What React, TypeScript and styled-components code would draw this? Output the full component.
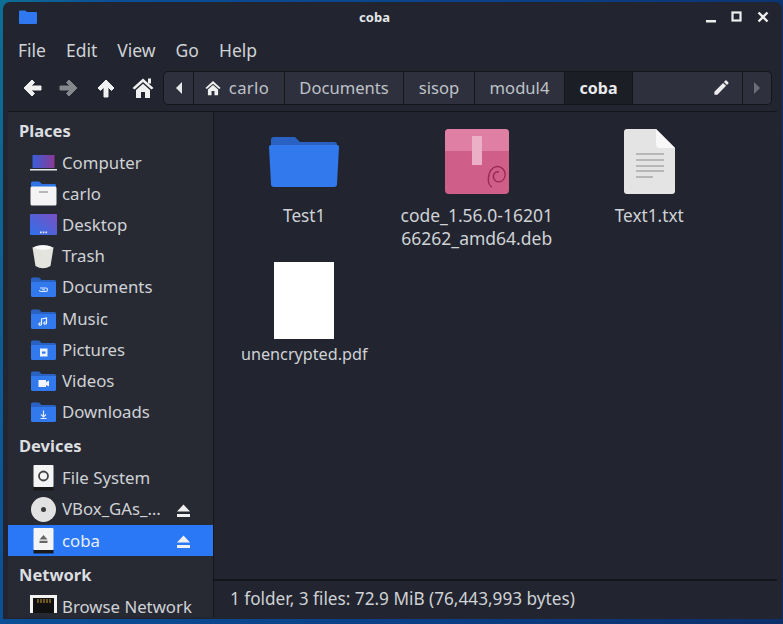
import React from "react";
import styled, { createGlobalStyle } from "styled-components";
import { MdEdit } from "react-icons/md";

const Global = createGlobalStyle`
  html, body { margin: 0; padding: 0; height: 100%; overflow: hidden; }
  body { background: #0a3f86; font-family: "Noto Sans", sans-serif; }
`;

const Desktop = styled.div`
  width: 783px;
  height: 624px;
  padding: 2px 1px 5px 3px;
  box-sizing: border-box;
  background: linear-gradient(100deg, #0d6f95 0%, #0b4f97 12%, #0a3f86 60%, #0c2f6a 100%);
`;

const Window = styled.div`
  height: 100%;
  display: flex;
  flex-direction: column;
  background: #22252f;
  border-radius: 7px 7px 0 0;
  color: #cfd2d6;
  overflow: hidden;
`;

const TitleBar = styled.div`
  height: 30px;
  display: flex;
  align-items: center;
  justify-content: space-between;
  padding: 0 13px 0 16px;
  flex: none;
`;

const TitleText = styled.div`
  font-size: 13px;
  font-weight: 700;
  color: #e4e6e8;
  margin-left: 7px;
`;

const WindowButtons = styled.div`
  display: flex;
  align-items: center;
  gap: 14px;
`;

const MenuBar = styled.div`
  height: 30px;
  display: flex;
  align-items: center;
  gap: 20px;
  padding: 5px 0 0 15px;
  box-sizing: border-box;
  font-size: 17.5px;
  flex: none;
`;

const Toolbar = styled.div`
  height: 49px;
  display: flex;
  align-items: center;
  padding: 2px 10px 0 18px;
  box-sizing: border-box;
  flex: none;
`;

const NavButtons = styled.div`
  display: flex;
  align-items: center;
  gap: 15px;
  margin-right: 9px;
`;

const PathBar = styled.div`
  flex: 1;
  height: 34px;
  display: flex;
  align-items: stretch;
  background: #14161c;
  border-radius: 5px;
  padding: 1px;
  gap: 1px;
  box-sizing: border-box;
  font-size: 16.6px;
`;

const Crumb = styled.div<{ $width: number; $active?: boolean }>`
  width: ${(p) => p.$width}px;
  flex: none;
  display: flex;
  align-items: center;
  justify-content: center;
  gap: 8px;
  box-sizing: border-box;
  background: ${(p) => (p.$active ? "#1c1e26" : "#2e313d")};
  color: ${(p) => (p.$active ? "#e8eaec" : "#bfc2c8")};
  font-size: ${(p) => (p.$active ? "16px" : "inherit")};
  font-weight: ${(p) => (p.$active ? 700 : 400)};
  &:first-child { border-radius: 4px 0 0 4px; }
  &:last-child { border-radius: 0 4px 4px 0; }
`;

const HomeCrumb = styled(Crumb)`
  letter-spacing: 0.4px;
  padding-right: 4px;
`;

const PathFill = styled.div`
  flex: 1;
  display: flex;
  align-items: center;
  justify-content: flex-end;
  padding-right: 11px;
  background: #2e313d;
  color: #ececec;
`;

const Body = styled.div`
  flex: 1;
  display: flex;
  min-height: 0;
  border-top: 1px solid #14161c;
  margin: 0 5px 2px 5px;
`;

const Sidebar = styled.div`
  width: 206px;
  flex: none;
  overflow: hidden;
  border-right: 1px solid #14161c;
  background: #282a33;
  padding-top: 3px;
  box-sizing: border-box;
`;

const SectionTitle = styled.div<{ $first?: boolean }>`
  height: 32px;
  margin-top: ${(p) => (p.$first ? 0 : 3)}px;
  display: flex;
  align-items: center;
  padding: 0 0 2px 11px;
  box-sizing: border-box;
  font-size: 16.5px;
  font-weight: 700;
  color: #dcdee0;
`;

const PlaceRow = styled.div<{ $selected?: boolean }>`
  height: 31.2px;
  display: flex;
  align-items: center;
  padding-left: 21px;
  font-size: 16.8px;
  line-height: 20px;
  position: relative;
  color: ${(p) => (p.$selected ? "#e6eefc" : "#cfd2d6")};
  background: ${(p) => (p.$selected ? "#2a78f5" : "transparent")};
`;

const PlaceIcon = styled.div`
  width: 28px;
  height: 28px;
  margin-right: 5px;
  display: flex;
  align-items: center;
  justify-content: center;
  flex: none;
`;

const CutOffIcon = styled(PlaceIcon)`
  align-items: flex-end;
  height: 18px;
  margin-bottom: 6px;
`;

const Eject = styled.div`
  position: absolute;
  left: 169px;
  top: 10px;
  display: flex;
`;

const Main = styled.div`
  flex: 1;
  display: flex;
  flex-direction: column;
  min-width: 0;
`;

const IconGrid = styled.div`
  flex: 1;
  display: grid;
  grid-template-columns: repeat(3, 172.5px);
  grid-auto-rows: 139px;
  padding: 11px 0 0 4px;
  align-content: start;
`;

const FileItem = styled.div`
  display: flex;
  flex-direction: column;
  align-items: center;
`;

const FileThumb = styled.div`
  height: 77px;
  display: flex;
  align-items: center;
  justify-content: center;
`;

const FileName = styled.div<{ $size: number }>`
  margin-top: 4px;
  width: 156px;
  font-size: ${(p) => p.$size}px;
  line-height: 23px;
  text-align: center;
  word-break: break-all;
`;

const BlankPage = styled.div`
  width: 60px;
  height: 77px;
  background: #fff;
`;

const StatusBar = styled.div`
  height: 38px;
  flex: none;
  display: flex;
  align-items: center;
  padding: 0 0 2px 16px;
  box-sizing: border-box;
  font-size: 17.2px;
  border-top: 2px solid #14161c;
  background: #22252f;
`;

const Arrow = ({ dir, color }: { dir: "left" | "right" | "up"; color: string }) => {
  const rotate = dir === "left" ? 0 : dir === "right" ? 180 : 90;
  return (
    <svg width="22" height="22" viewBox="0 0 22 22" style={{ transform: `rotate(${rotate}deg)` }}>
      <path d="M3 11 L11 3 L13.5 5.5 L10 9 H20 V13 H10 L13.5 16.5 L11 19 Z" fill={color} stroke={color} strokeLinejoin="round" />
    </svg>
  );
};

const HomeIcon = ({ size, chimney }: { size: number; chimney?: boolean }) => (
  <svg width={size} height={size} viewBox="0 0 22 22" fill="#f0f0f0">
    <path d="M11 1.5 L21.5 11 L19.5 12.5 L11 5 L2.5 12.5 L0.5 11 Z" />
    <path d="M4 13 L11 6.8 L18 13 V21 H13 V15 H9 V21 H4 Z" />
    {chimney && <rect x="16" y="1.5" width="3" height="5" />}
  </svg>
);

const FolderGlyph = ({ glyph }: { glyph?: React.ReactNode }) => (
  <svg width="25" height="20" viewBox="0 0 25 20">
    <path d="M0 2 Q0 0.5 1.5 0.5 H8 L10.5 3 H23.5 Q25 3 25 4.5 V8 H0 Z" fill="#2a62c4" />
    <path d="M0 5 H25 V18.5 Q25 20 23.5 20 H1.5 Q0 20 0 18.5 Z" fill="#3279ee" />
    {glyph}
  </svg>
);

const EjectIcon = () => (
  <svg width="13" height="13" viewBox="0 0 13 13" fill="#f0f0f0">
    <path d="M6.5 0.5 L13 7.5 H0 Z" />
    <rect x="0" y="10" width="13" height="3" />
  </svg>
);

const places: { label: string; icon: React.ReactNode }[] = [
  {
    label: "Computer",
    icon: (
      <svg width="27" height="17" viewBox="0 0 27 17">
        <defs>
          <linearGradient id="screen" x1="0" x2="1">
            <stop offset="0" stopColor="#3a5fd8" />
            <stop offset="1" stopColor="#8a3a96" />
          </linearGradient>
        </defs>
        <rect x="2.5" y="1" width="22" height="13" fill="url(#screen)" />
        <rect x="0" y="15" width="27" height="1.5" fill="#e8e8e8" />
      </svg>
    ),
  },
  {
    label: "carlo",
    icon: (
      <svg width="27" height="25" viewBox="0 0 27 25">
        <path d="M1 6 V2 Q1 0.5 2.5 0.5 H9 L12 3 H25 Q26 3 26 4.5 V6 Z" fill="#2f74e6" />
        <rect x="0.5" y="5.5" width="26" height="19" rx="1.5" fill="#f4f4f4" />
        <rect x="9" y="10" width="9" height="2" fill="#b8b8b8" />
      </svg>
    ),
  },
  {
    label: "Desktop",
    icon: (
      <svg width="27" height="21" viewBox="0 0 27 21">
        <defs>
          <linearGradient id="desk" x1="0" y1="1" x2="1" y2="0">
            <stop offset="0" stopColor="#2f72ea" />
            <stop offset="1" stopColor="#7a4fc4" />
          </linearGradient>
        </defs>
        <rect width="27" height="21" rx="1" fill="url(#desk)" />
        <path d="M10 17.5 h1.7 v1.7 h-1.7 Z M12.7 17.5 h1.7 v1.7 h-1.7 Z M15.4 17.5 h1.7 v1.7 h-1.7 Z" fill="#e8e8f0" />
      </svg>
    ),
  },
  {
    label: "Trash",
    icon: (
      <svg width="22" height="25" viewBox="0 0 22 25">
        <path d="M0.5 3.5 Q11 -1 21.5 3.5 L18.5 22 Q11 26.5 3.5 22 Z" fill="#e4e4df" />
        <ellipse cx="11" cy="3.5" rx="8.5" ry="2.2" fill="#fbfbfb" />
      </svg>
    ),
  },
  {
    label: "Documents",
    icon: (
      <FolderGlyph
        glyph={
          <path d="M9 11 H15 Q16.5 11 16.5 12.5 Q16.5 14.5 15 14.5 H10 Q8.5 14.5 8.5 13 M11 12.8 H14" fill="none" stroke="#dce8fc" strokeWidth="1.1" />
        }
      />
    ),
  },
  {
    label: "Music",
    icon: (
      <FolderGlyph
        glyph={<path d="M10.5 15 V10 L15.5 9 V14 M10.5 15 a1.3 1.1 0 1 1 -1 -1 M15.5 14 a1.3 1.1 0 1 1 -1 -1" fill="none" stroke="#eef3fd" strokeWidth="1.2" />}
      />
    ),
  },
  {
    label: "Pictures",
    icon: (
      <FolderGlyph
        glyph={
          <>
            <rect x="9" y="8.5" width="7.5" height="8" fill="#eef3fd" />
            <rect x="11" y="11.5" width="3.5" height="2.2" fill="#3279ee" />
          </>
        }
      />
    ),
  },
  {
    label: "Videos",
    icon: (
      <FolderGlyph
        glyph={<path d="M7.5 9 H15 V11 L18 9.5 V15.5 L15 14 V16 H7.5 Z" fill="#f2f5fd" />}
      />
    ),
  },
  {
    label: "Downloads",
    icon: (
      <FolderGlyph
        glyph={<path d="M12.5 8.5 V14.5 M10 12.5 L12.5 15 L15 12.5 M9.5 16.5 H15.5" fill="none" stroke="#e2ebfc" strokeWidth="1.2" />}
      />
    ),
  },
];

const DriveIcon = ({ glyph }: { glyph: React.ReactNode }) => (
  <svg width="21" height="26" viewBox="0 0 21 26">
    <rect x="0.5" y="0" width="20" height="22" rx="1" fill="#f4f4f4" />
    <rect x="0.5" y="22" width="20" height="3.5" fill="#1a1a1a" />
    {glyph}
  </svg>
);

const App: React.FC = () => (
  <>
    <Global />
    <Desktop>
      <Window>
        <TitleBar>
          <svg width="18" height="14" viewBox="0 0 18 14">
            <path d="M0 1.5 Q0 0.5 1 0.5 H6 L8 2 H17 Q18 2 18 3 V13 Q18 14 17 14 H1 Q0 14 0 13 Z" fill="#2f78f0" />
          </svg>
          <TitleText>coba</TitleText>
          <WindowButtons>
            <svg width="12" height="12" viewBox="0 0 12 12"><rect x="1" y="9" width="10" height="2.5" fill="#eee" /></svg>
            <svg width="12" height="12" viewBox="0 0 12 12"><rect x="1.5" y="1.5" width="8" height="8" fill="none" stroke="#eee" strokeWidth="2.2" /></svg>
            <svg width="12" height="12" viewBox="0 0 12 12"><path d="M1.5 1.5 L10.5 10.5 M10.5 1.5 L1.5 10.5" stroke="#eee" strokeWidth="2.4" /></svg>
          </WindowButtons>
        </TitleBar>
        <MenuBar>
          <span>File</span>
          <span>Edit</span>
          <span>View</span>
          <span>Go</span>
          <span>Help</span>
        </MenuBar>
        <Toolbar>
          <NavButtons>
            <Arrow dir="left" color="#f0f0f0" />
            <Arrow dir="right" color="#85878c" />
            <Arrow dir="up" color="#f0f0f0" />
            <HomeIcon size={22} chimney />
          </NavButtons>
          <PathBar>
            <Crumb $width={29}>
              <svg width="6" height="12" viewBox="0 0 6 12"><path d="M6 0 L0 6 L6 12 Z" fill="#e8e8e8" /></svg>
            </Crumb>
            <HomeCrumb $width={90}>
              <HomeIcon size={16} />
              carlo
            </HomeCrumb>
            <Crumb $width={118}>Documents</Crumb>
            <Crumb $width={70}>sisop</Crumb>
            <Crumb $width={89}>modul4</Crumb>
            <Crumb $active $width={67}>coba</Crumb>
            <PathFill>
              <MdEdit size={19} />
            </PathFill>
            <Crumb $width={28}>
              <svg width="6" height="12" viewBox="0 0 6 12"><path d="M0 0 L6 6 L0 12 Z" fill="#6b6e76" /></svg>
            </Crumb>
          </PathBar>
        </Toolbar>
        <Body>
          <Sidebar>
            <SectionTitle $first>Places</SectionTitle>
            {places.map((p) => (
              <PlaceRow key={p.label}>
                <PlaceIcon>{p.icon}</PlaceIcon>
                {p.label}
              </PlaceRow>
            ))}
            <SectionTitle>Devices</SectionTitle>
            <PlaceRow>
              <PlaceIcon>
                <DriveIcon glyph={<circle cx="10.5" cy="11" r="4.5" fill="none" stroke="#444" strokeWidth="1.8" />} />
              </PlaceIcon>
              File System
            </PlaceRow>
            <PlaceRow>
              <PlaceIcon>
                <svg width="25" height="25" viewBox="0 0 25 25">
                  <circle cx="12.5" cy="12.5" r="12.5" fill="#e2e2e2" />
                  <circle cx="12.5" cy="12.5" r="2.5" fill="#3a3a3a" />
                </svg>
              </PlaceIcon>
              VBox_GAs_…
              <Eject><EjectIcon /></Eject>
            </PlaceRow>
            <PlaceRow $selected>
              <PlaceIcon>
                <DriveIcon glyph={<path d="M10.5 7 L14.5 11.5 H6.5 Z M6.5 12.8 H14.5 V15 H6.5 Z" fill="#666" />} />
              </PlaceIcon>
              coba
              <Eject><EjectIcon /></Eject>
            </PlaceRow>
            <SectionTitle>Network</SectionTitle>
            <PlaceRow>
              <CutOffIcon>
                <svg width="27" height="18" viewBox="0 0 27 18">
                  <rect x="0" y="0" width="27" height="18" fill="#f4f4f4" />
                  <path d="M3 18 V3 H24 V18 Z" fill="#111" />
                  <path d="M8 4 V8 M11 4 V8 M14 4 V8 M17 4 V8 M20 4 V8" stroke="#c8a030" strokeWidth="1" />
                </svg>
              </CutOffIcon>
              Browse Network
            </PlaceRow>
          </Sidebar>
          <Main>
            <IconGrid>
              <FileItem>
                <FileThumb>
                  <svg width="70" height="50" viewBox="0 0 70 50">
                    <path d="M2 3 Q2 0 5 0 H26 L31 5 H65 Q68 5 68 8 V14 H2 Z" fill="#2a62c4" />
                    <path d="M0 10 Q0 8 2 8 H68 Q70 8 70 10 L68 47 Q68 50 65 50 H5 Q2 50 2 47 Z" fill="#3279ee" />
                  </svg>
                </FileThumb>
                <FileName $size={17.2}>Test1</FileName>
              </FileItem>
              <FileItem>
                <FileThumb>
                  <svg width="64" height="65" viewBox="0 0 64 65">
                    <rect width="64" height="65" rx="4" fill="#cf5f88" />
                    <path d="M0 4 Q0 0 4 0 H60 Q64 0 64 4 V22 H0 Z" fill="#df7fa3" />
                    <rect x="27" y="7" width="10" height="29" fill="#ecb0c6" />
                    <path d="M47 58 C42 56 42 44 48 39 C54 35 61 40 60 47 C59 53 52 55 49 50 C47 46 50 42 54 43" fill="none" stroke="#9a2a55" strokeWidth="1.4" />
                  </svg>
                </FileThumb>
                <FileName $size={17.5}>code_1.56.0-1620166262_amd64.deb</FileName>
              </FileItem>
              <FileItem>
                <FileThumb>
                  <svg width="51" height="65" viewBox="0 0 51 65">
                    <path d="M3 0 H32 L51 19 V62 Q51 65 48 65 H3 Q0 65 0 62 V3 Q0 0 3 0 Z" fill="#e4e4e4" />
                    <path d="M32 0 L51 19 H36 Q32 19 32 15 Z" fill="#f8f8f8" />
                    <path d="M12 25 H40 M12 31 H40 M12 37 H40 M12 42 H40 M12 48 H29" stroke="#a8a8a8" strokeWidth="1.3" />
                  </svg>
                </FileThumb>
                <FileName $size={17.2}>Text1.txt</FileName>
              </FileItem>
              <FileItem>
                <FileThumb>
                  <BlankPage />
                </FileThumb>
                <FileName $size={16.2}>unencrypted.pdf</FileName>
              </FileItem>
            </IconGrid>
            <StatusBar>1 folder, 3 files: 72.9 MiB (76,443,993 bytes)</StatusBar>
          </Main>
        </Body>
      </Window>
    </Desktop>
  </>
);

export default App;
